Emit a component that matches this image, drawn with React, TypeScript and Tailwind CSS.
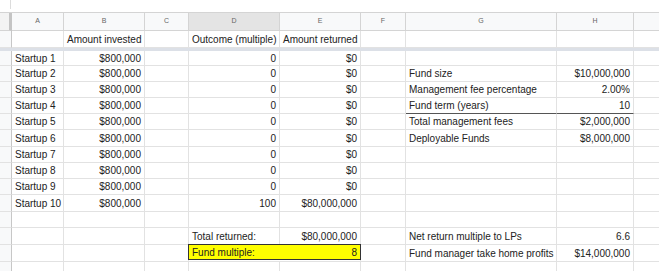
import React from "react";

type Cell = { t?: string; r?: boolean; dark?: boolean };

const widths = ["w-[52px]", "w-[81px]", "w-[44px]", "w-[91px]", "w-[81px]", "w-[45px]", "w-[151px]", "w-[77px]", "w-[100px]"];
const letters = ["A", "B", "C", "D", "E", "F", "G", "H", ""];

const GridCell = ({ c, w }: { c?: Cell; w: string }) => (
  <div
    className={`${w} shrink-0 h-full flex items-center px-[3px] whitespace-nowrap border-r border-b border-r-[#e2e2e2] ${
      c?.dark ? "border-b-[#555]" : "border-b-[#e2e2e2]"
    } ${c?.r ? "justify-end" : "justify-start"}`}
  >
    {c?.t}
  </div>
);

const RowNum = () => <div className="w-[12px] shrink-0 h-full bg-[#f8f9fa] border-r border-b border-r-[#c7c7c7] border-b-[#e2e2e2]" />;

const Row = ({ h, cells, yellow }: { h: string; cells: (Cell | undefined)[]; yellow?: [string, string] }) => (
  <div className={`flex ${h}`}>
    <RowNum />
    {widths.map((w, i) => {
      if (yellow && i === 3) {
        return (
          <div key={i} className="w-[172px] shrink-0 h-full border-b border-r border-b-[#e2e2e2] border-r-[#e2e2e2]">
            <div className="h-full flex items-center justify-between px-[3px] bg-[#ffff00] border border-[#333] -ml-px -mt-px w-[173px] h-[calc(100%+1px)]">
              <span>{yellow[0]}</span>
              <span>{yellow[1]}</span>
            </div>
          </div>
        );
      }
      if (yellow && i === 4) return null;
      return <GridCell key={i} c={cells[i]} w={w} />;
    })}
  </div>
);

const heights = ["h-[15px]", "h-[16px]", "h-[16px]", "h-[16px]", "h-[16px]", "h-[17px]", "h-[16px]", "h-[16px]", "h-[16px]", "h-[17px]", "h-[16px]", "h-[17px]", "h-[17px]", "h-[16px]"];

const gh: Record<number, [string, string, boolean?]> = {
  1: ["Fund size", "$10,000,000"],
  2: ["Management fee percentage", "2.00%"],
  3: ["Fund term (years)", "10", true],
  4: ["Total management fees", "$2,000,000"],
  5: ["Deployable Funds", "$8,000,000"],
  11: ["Net return multiple to LPs", "6.6"],
  12: ["Fund manager take home profits", "$14,000,000"],
};

export default function App() {
  const rows = heights.map((h, i) => {
    const cells: (Cell | undefined)[] = new Array(9).fill(undefined);
    if (i < 10) {
      cells[0] = { t: `Startup ${i + 1}` };
      cells[1] = { t: "$800,000", r: true };
      cells[3] = { t: i === 9 ? "100" : "0", r: true };
      cells[4] = { t: i === 9 ? "$80,000,000" : "$0", r: true };
    }
    if (i === 11) {
      cells[3] = { t: "Total returned:" };
      cells[4] = { t: "$80,000,000", r: true };
    }
    const g = gh[i];
    if (g) {
      cells[6] = { t: g[0], dark: g[2] };
      cells[7] = { t: g[1], r: true, dark: g[2] };
    }
    return <Row key={i} h={h} cells={cells} yellow={i === 12 ? ["Fund multiple:", "8"] : undefined} />;
  });

  return (
    <div className="w-[659px] h-[271px] overflow-hidden bg-white font-['Liberation_Sans',Arial,sans-serif] text-[10px] text-[#222] leading-normal">
      <div className="h-[12px] flex">
        <div className="w-[11px] h-[9px] border-r border-[#dcdcdc]" />
      </div>
      <div className="flex h-[19px] border-t border-[#d4d4d4]">
        <div className="w-[12px] shrink-0 h-full bg-[#f3f3f3] border-r-[3px] border-[#c4c4c4] border-b border-b-[#d4d4d4]" />
        {widths.map((w, i) => (
          <div
            key={i}
            className={`${w} shrink-0 h-full flex items-center justify-center text-[7px] text-[#666] border-r border-b border-[#d4d4d4] ${
              i === 3 ? "bg-[#e4e4e4]" : "bg-[#f8f9fa]"
            }`}
          >
            {letters[i]}
          </div>
        ))}
      </div>
      <Row
        h="h-[17px]"
        cells={[undefined, { t: "Amount invested" }, undefined, { t: "Outcome (multiple)" }, { t: "Amount returned" }]}
      />
      <div className="h-[3px] bg-[#dce0e7]" />
      {rows}
    </div>
  );
}
